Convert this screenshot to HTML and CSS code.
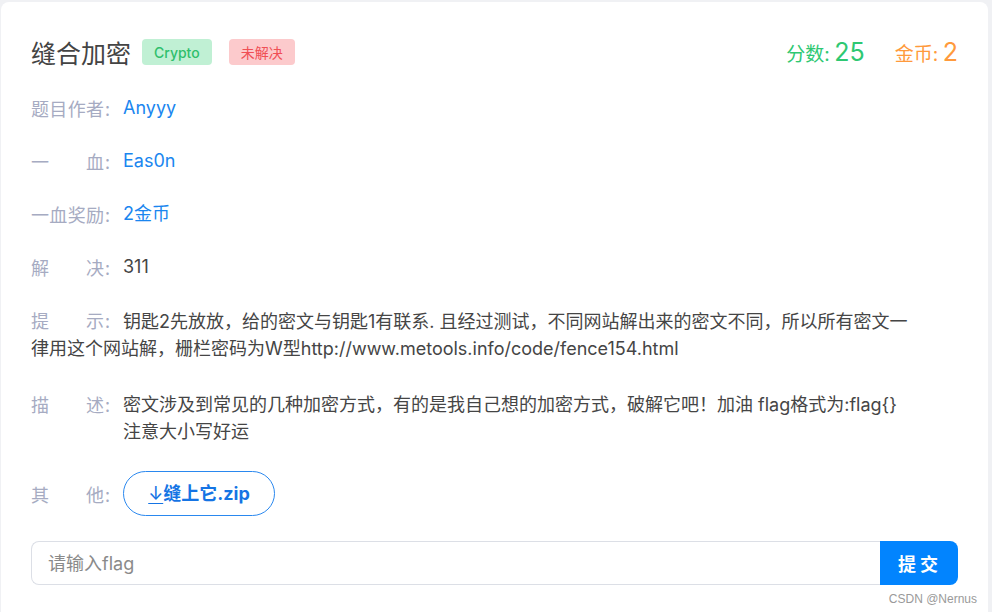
FILE: index.html
```html
<!DOCTYPE html>
<html lang="zh-CN">
<head>
<meta charset="utf-8">
<title>缝合加密</title>
<link rel="stylesheet" href="styles.css">
</head>
<body>
<div class="card">
  <div class="header">
    <div class="title-group">
      <h1 class="title">缝合加密</h1>
      <span class="tag tag-green">Crypto</span>
      <span class="tag tag-red">未解决</span>
    </div>
    <div class="stats">
      <span class="stat stat-score"><span class="stat-label">分数:</span> <span class="stat-num">25</span></span>
      <span class="stat stat-coin"><span class="stat-label">金币:</span> <span class="stat-num">2</span></span>
    </div>
  </div>

  <div class="row row-first">
    <span class="label"><span class="label-text">题目作者</span>:</span><span class="value link">Anyyy</span>
  </div>
  <div class="row">
    <span class="label"><span class="label-text">一血</span>:</span><span class="value link">Eas0n</span>
  </div>
  <div class="row">
    <span class="label"><span class="label-text">一血奖励</span>:</span><span class="value link">2金币</span>
  </div>
  <div class="row">
    <span class="label"><span class="label-text">解决</span>:</span><span class="value">311</span>
  </div>
  <div class="row row-inline row-hint">
    <span class="label"><span class="label-text">提示</span>:</span>钥匙2先放放，给的密文与钥匙1有联系. 且经过测试，不同网站解出来的密文不同，所以所有密文一<br>律用这个网站解，栅栏密码为W型http://www.metools.info/code/fence154.html
  </div>
  <div class="row row-desc">
    <span class="label"><span class="label-text">描述</span>:</span><span class="value">密文涉及到常见的几种加密方式，有的是我自己想的加密方式，破解它吧！加油 flag格式为:flag{}<br>注意大小写好运</span>
  </div>
  <div class="row row-btn">
    <span class="label"><span class="label-text">其他</span>:</span><a class="download" href="#"><span class="arrow">↓</span>缝上它.zip</a>
  </div>

  <form class="submit-bar" onsubmit="return false">
    <input class="flag-input" type="text" placeholder="请输入flag">
    <button class="submit-btn" type="submit">提交</button>
  </form>
</div>
<div class="watermark">CSDN @Nernus</div>
</body>
</html>
```

FILE: styles.css
```css
html, body {
  margin: 0;
  padding: 0;
  background: #f0f1f4;
  height: 100%;
  overflow: hidden;
}

body {
  font-family: "Inter", "Noto Sans CJK SC", sans-serif;
  color: #454545;
  padding: 2px 4px 0 1px;
  box-sizing: border-box;
}

.card {
  background: #ffffff;
  border-radius: 8px;
  padding: 29px 30px 40px 30px;
  min-height: 640px;
  box-sizing: border-box;
}

.header {
  display: flex;
  justify-content: space-between;
  align-items: center;
  height: 42px;
}

.title-group {
  display: flex;
  align-items: center;
}

.title {
  margin: 0;
  font-size: 25px;
  font-weight: 400;
  color: #444;
  font-family: "Noto Sans CJK SC", sans-serif;
  line-height: 42px;
}

.tag {
  display: inline-flex;
  align-items: center;
  height: 26px;
  padding: 0 12px;
  border-radius: 4px;
  font-size: 14px;
  box-sizing: border-box;
}

.tag-green {
  background: #c0f0d4;
  color: #2fbf6c;
  font-weight: 500;
  margin-left: 11px;
}

.tag-red {
  background: #fccacc;
  color: #f04f55;
  margin-left: 17px;
}

.stats {
  display: flex;
  align-items: baseline;
  gap: 30px;
}

.stat-label {
  font-size: 19px;
}

.stat-num {
  font-size: 25px;
}

.stat-score { color: #2ec872; }
.stat-coin { color: #ff9a3c; }

.row {
  display: flex;
  align-items: flex-start;
  font-size: 18px;
  line-height: 28px;
  margin-top: 25px;
}

.row-first {
  margin-top: 21px;
}

.row-hint {
  line-height: 27px;
  margin-top: 26px;
}

.row-desc {
  line-height: 27px;
  margin-top: 29px;
}

.row-inline {
  display: block;
}

.label {
  display: inline-block;
  width: 92px;
  color: #a6abc2;
  flex-shrink: 0;
  white-space: nowrap;
  font-family: "Noto Sans CJK SC", sans-serif;
}

.label-text {
  display: inline-block;
  width: 73px;
  margin-right: 1px;
  text-align: justify;
  text-align-last: justify;
}

.value {
  color: #454545;
}

.link {
  color: #1a86ef;
}

.row-btn {
  align-items: center;
  margin-top: 26px;
}

.download {
  display: inline-flex;
  align-items: center;
  justify-content: center;
  width: 152px;
  height: 45px;
  box-sizing: border-box;
  border: 1px solid #2a88ef;
  border-radius: 23px;
  color: #1574e4;
  font-weight: 700;
  font-size: 18px;
  text-decoration: none;
}

.arrow {
  text-decoration: underline;
  text-underline-offset: 3px;
  font-weight: 400;
}

.submit-bar {
  display: flex;
  margin: 25px 0 0 0;
  height: 44px;
}

.flag-input {
  flex: 1;
  height: 44px;
  box-sizing: border-box;
  border: 1px solid #dcdfe6;
  border-right: none;
  border-radius: 8px 0 0 8px;
  padding: 0 16px;
  font-size: 18px;
  font-family: "Inter", "Noto Sans CJK SC", sans-serif;
  color: #454545;
  outline: none;
}

.flag-input::placeholder {
  color: #8a8a8a;
}

.submit-btn {
  width: 78px;
  height: 44px;
  border: none;
  border-radius: 0 8px 8px 0;
  background: #0284fe;
  color: #ffffff;
  font-size: 18px;
  font-weight: 700;
  letter-spacing: 4px;
  padding-left: 8px;
  font-family: "Noto Sans CJK SC", sans-serif;
  cursor: pointer;
}

.watermark {
  position: absolute;
  right: 15px;
  bottom: 6px;
  font-size: 12px;
  color: #9a9a9a;
  font-family: "Liberation Sans", "Noto Sans CJK SC", sans-serif;
}
```
